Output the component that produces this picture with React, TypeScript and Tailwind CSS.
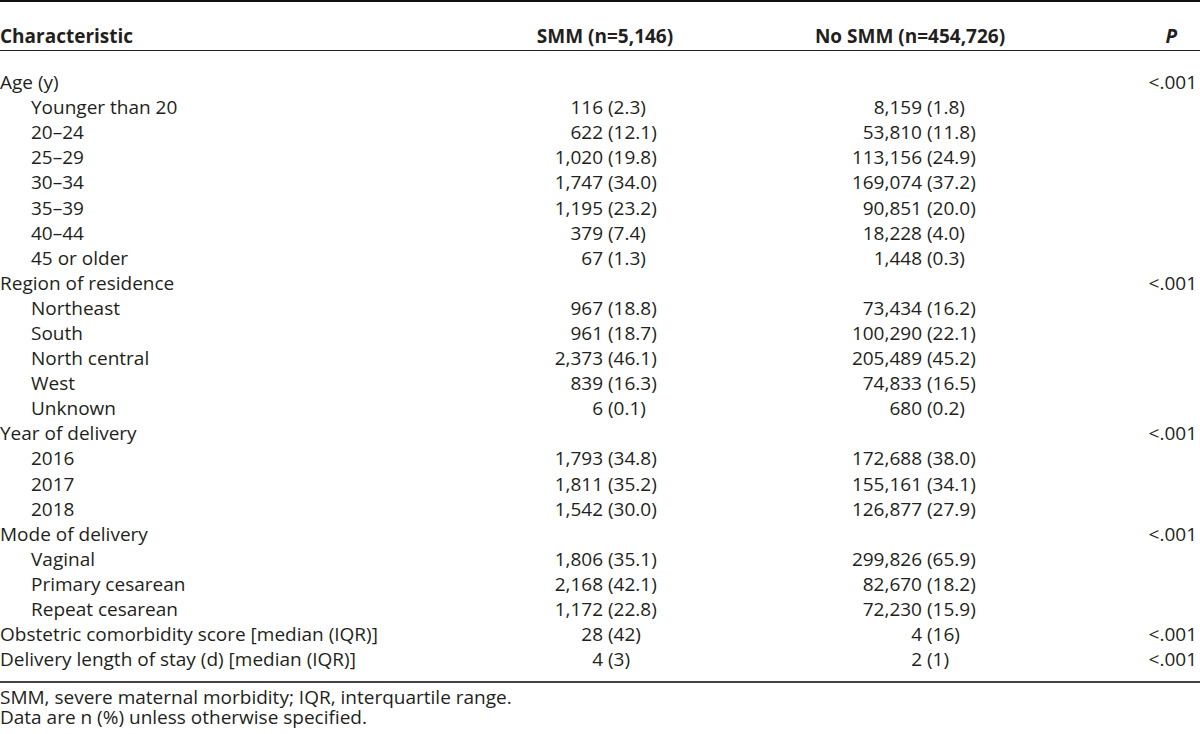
import React from "react";

type Row = {
  label: string;
  indent?: boolean;
  a?: [string, string];
  b?: [string, string];
  p?: string;
};

const rows: Row[] = [
  { label: "Age (y)", p: "<.001" },
  { label: "Younger than 20", indent: true, a: ["116", "(2.3)"], b: ["8,159", "(1.8)"] },
  { label: "20–24", indent: true, a: ["622", "(12.1)"], b: ["53,810", "(11.8)"] },
  { label: "25–29", indent: true, a: ["1,020", "(19.8)"], b: ["113,156", "(24.9)"] },
  { label: "30–34", indent: true, a: ["1,747", "(34.0)"], b: ["169,074", "(37.2)"] },
  { label: "35–39", indent: true, a: ["1,195", "(23.2)"], b: ["90,851", "(20.0)"] },
  { label: "40–44", indent: true, a: ["379", "(7.4)"], b: ["18,228", "(4.0)"] },
  { label: "45 or older", indent: true, a: ["67", "(1.3)"], b: ["1,448", "(0.3)"] },
  { label: "Region of residence", p: "<.001" },
  { label: "Northeast", indent: true, a: ["967", "(18.8)"], b: ["73,434", "(16.2)"] },
  { label: "South", indent: true, a: ["961", "(18.7)"], b: ["100,290", "(22.1)"] },
  { label: "North central", indent: true, a: ["2,373", "(46.1)"], b: ["205,489", "(45.2)"] },
  { label: "West", indent: true, a: ["839", "(16.3)"], b: ["74,833", "(16.5)"] },
  { label: "Unknown", indent: true, a: ["6", "(0.1)"], b: ["680", "(0.2)"] },
  { label: "Year of delivery", p: "<.001" },
  { label: "2016", indent: true, a: ["1,793", "(34.8)"], b: ["172,688", "(38.0)"] },
  { label: "2017", indent: true, a: ["1,811", "(35.2)"], b: ["155,161", "(34.1)"] },
  { label: "2018", indent: true, a: ["1,542", "(30.0)"], b: ["126,877", "(27.9)"] },
  { label: "Mode of delivery", p: "<.001" },
  { label: "Vaginal", indent: true, a: ["1,806", "(35.1)"], b: ["299,826", "(65.9)"] },
  { label: "Primary cesarean", indent: true, a: ["2,168", "(42.1)"], b: ["82,670", "(18.2)"] },
  { label: "Repeat cesarean", indent: true, a: ["1,172", "(22.8)"], b: ["72,230", "(15.9)"] },
  { label: "Obstetric comorbidity score [median (IQR)]", a: ["28", "(42)"], b: ["4", "(16)"], p: "<.001" },
  { label: "Delivery length of stay (d) [median (IQR)]", a: ["4", "(3)"], b: ["2", "(1)"], p: "<.001" },
];

export default function App() {
  return (
    <div
      className="w-[1200px] h-[734px] bg-white text-[#231f20] text-[19px] overflow-hidden"
      style={{ fontFamily: '"Open Sans", "Noto Sans", sans-serif' }}
    >
      <div className="border-t-2 border-[#111]" />
      <div className="flex items-center h-[49px] pt-[20px] font-bold border-b-[1.5px] border-[#222]">
        <div className="w-[470px]">Characteristic</div>
        <div className="w-[270px] text-center">SMM (n=5,146)</div>
        <div className="w-[340px] text-center">No SMM (n=454,726)</div>
        <div className="w-[120px] text-right pr-[23px] italic">P</div>
      </div>
      <div className="pt-[19px] pb-[9px] border-b-2 border-[#444]">
        {rows.map((r, i) => (
          <div key={i} className="flex items-center h-[25.1px] leading-[25px] whitespace-nowrap">
            <div className={`w-[470px] ${r.indent ? "pl-[31px]" : ""}`}>{r.label}</div>
            <div className="w-[133px] text-right">{r.a ? r.a[0] : ""}</div>
            <div className="w-[137px] pl-[5px]">{r.a ? r.a[1] : ""}</div>
            <div className="w-[182px] text-right">{r.b ? r.b[0] : ""}</div>
            <div className="w-[158px] pl-[5px]">{r.b ? r.b[1] : ""}</div>
            <div className="w-[120px] text-right pr-[3px]">{r.p ?? ""}</div>
          </div>
        ))}
      </div>
      <div className="pt-[5px] leading-[19.5px]">
        <div>SMM, severe maternal morbidity; IQR, interquartile range.</div>
        <div>Data are n (%) unless otherwise specified.</div>
      </div>
    </div>
  );
}
